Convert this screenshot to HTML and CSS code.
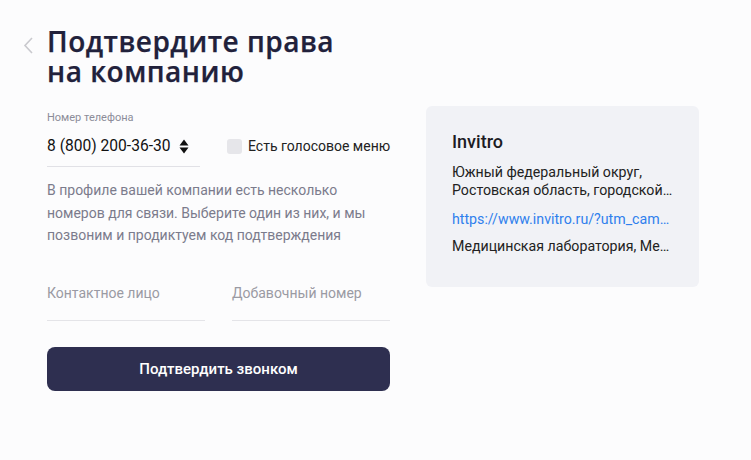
FILE: index.html
```html
<!DOCTYPE html>
<html lang="ru">
<head>
<meta charset="utf-8">
<title>Подтвердите права на компанию</title>
<link rel="stylesheet" href="styles.css">
</head>
<body>
<div class="page">
  <a class="back" href="#" aria-label="Назад">
    <svg width="12" height="17" viewBox="0 0 12 17"><path d="M10 1 L3 8.5 L10 16" fill="none" stroke="#c9c9ce" stroke-width="1.6"/></svg>
  </a>
  <h1 class="title">Подтвердите права<br>на компанию</h1>
  <form class="form">
    <div class="label">Номер телефона</div>
    <div class="phone-row">
      <div class="select">
        <span class="select-value">8 (800) 200-36-30</span>
        <svg class="arrows" width="10" height="15" viewBox="0 0 10 15"><path d="M5 0.5 L9.5 6.5 L0.5 6.5 Z M0.5 8.5 L9.5 8.5 L5 14.5 Z" fill="#111"/></svg>
      </div>
      <label class="check">
        <span class="box"></span>
        <span>Есть голосовое меню</span>
      </label>
    </div>
    <p class="hint">В профиле вашей компании есть несколько номеров для связи. Выберите один из них, и мы позвоним и продиктуем код подтверждения</p>
    <div class="inputs">
      <div class="input">Контактное лицо</div>
      <div class="input">Добавочный номер</div>
    </div>
    <button class="btn" type="button">Подтвердить звонком</button>
  </form>
  <div class="card">
    <div class="card-title">Invitro</div>
    <div class="card-address">Южный федеральный округ, Ростовская область, городской округ Ростов-на-Дону</div>
    <a class="card-link" href="#">https://www.invitro.ru/?utm_campaign=yandex</a>
    <div class="card-cat">Медицинская лаборатория, Медицинский центр</div>
  </div>
</div>
</body>
</html>
```
FILE: styles.css
```css
html, body {
  margin: 0;
  padding: 0;
  background: #fcfcfd;
}
body {
  font-family: Roboto, "Noto Sans", sans-serif;
  color: #21212b;
}
.page {
  display: grid;
  grid-template-columns: 27px 343px 36px 273px;
  grid-template-rows: auto auto;
  padding: 26px 0 0 20px;
  align-items: start;
}
.back {
  grid-column: 1;
  grid-row: 1;
  display: block;
  padding-top: 11px;
  padding-left: 2px;
}
.title {
  grid-column: 2 / 5;
  grid-row: 1;
  margin: 0;
  font-family: "Open Sans", "Noto Sans", sans-serif;
  font-weight: 600;
  font-size: 28px;
  line-height: 30px;
  color: #21213b;
  letter-spacing: 0.5px;
  -webkit-text-stroke: 0.25px #21213b;
}
.form {
  grid-column: 2;
  grid-row: 2;
  margin-top: 20px;
  display: flex;
  flex-direction: column;
}
.label {
  padding-top: 5px;
  font-size: 11px;
  line-height: 13px;
  color: #8c8c99;
}
.phone-row {
  display: flex;
  align-items: flex-start;
  gap: 27px;
  margin-top: 10px;
}
.select {
  flex: 0 0 153px;
  display: flex;
  align-items: center;
  gap: 8px;
  padding-bottom: 8px;
  border-bottom: 1px solid #e1e1e6;
  font-size: 15.6px;
  line-height: 24px;
  color: #111;
}
.arrows { display: block; }
.check {
  flex: 0 0 auto;
  display: flex;
  align-items: center;
  gap: 6px;
  font-size: 14px;
  line-height: 24px;
  color: #222;
  white-space: nowrap;
}
.box {
  width: 15px;
  height: 15px;
  border-radius: 3px;
  background: #e6e6ea;
}
.hint {
  margin: 12px 0 0;
  font-size: 14px;
  line-height: 22.5px;
  color: #7b7b8c;
}
.inputs {
  display: flex;
  gap: 27px;
  margin-top: 24px;
}
.input {
  flex: 1;
  padding: 10px 0 15px;
  border-bottom: 1px solid #e4e4e8;
  font-size: 14px;
  line-height: 24px;
  color: #9a9aa3;
}
.btn {
  margin-top: 26px;
  height: 44px;
  border: 0;
  border-radius: 8px;
  background: #2e2f50;
  color: #fff;
  font-family: Roboto, "Noto Sans", sans-serif;
  font-size: 15px;
  font-weight: 500;
}
.card {
  grid-column: 4;
  grid-row: 2;
  margin-top: 20px;
  height: 181px;
  box-sizing: border-box;
  padding: 24px 26px 0 26px;
  background: #f1f2f6;
  border-radius: 6px;
  font-size: 14.2px;
  line-height: 17.5px;
  color: #222;
}
.card-title {
  font-size: 18px;
  line-height: 24px;
  font-weight: 500;
  color: #1c1c24;
}
.card-address {
  margin-top: 10px;
  display: -webkit-box;
  -webkit-line-clamp: 2;
  -webkit-box-orient: vertical;
  overflow: hidden;
}
.card-link {
  display: block;
  margin-top: 12px;
  color: #2f80ed;
  text-decoration: none;
  white-space: nowrap;
  overflow: hidden;
  text-overflow: ellipsis;
}
.card-cat {
  margin-top: 9px;
  white-space: nowrap;
  overflow: hidden;
  text-overflow: ellipsis;
}
```
